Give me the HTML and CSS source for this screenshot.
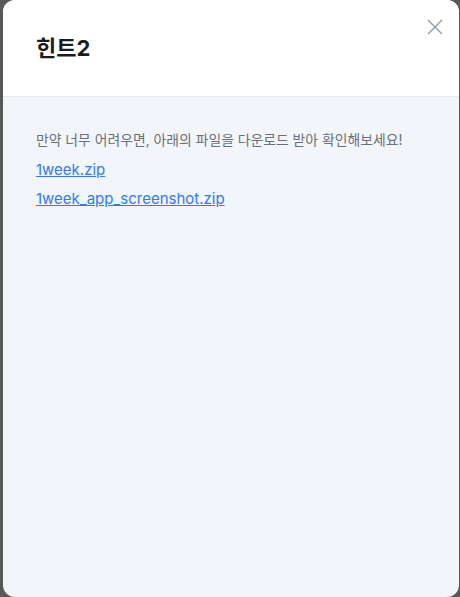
FILE: index.html
```html
<!DOCTYPE html>
<html lang="ko">
<head>
<meta charset="utf-8">
<link rel="stylesheet" href="styles.css">
</head>
<body>
<div class="modal">
  <div class="modal-header">
    <h2 class="title">힌트2</h2>
    <button class="close" aria-label="닫기">
      <svg width="16" height="16" viewBox="0 0 16 16"><path d="M1 1 L15 15 M15 1 L1 15" stroke="#9aa4ae" stroke-width="1.6" fill="none"/></svg>
    </button>
  </div>
  <div class="modal-body">
    <p class="desc">만약 너무 어려우면, 아래의 파일을 다운로드 받아 확인해보세요!</p>
    <a class="file" href="#">1week.zip</a>
    <a class="file" href="#">1week_app_screenshot.zip</a>
  </div>
</div>
</body>
</html>
```
FILE: styles.css
```css
html, body { margin: 0; padding: 0; }
body {
  background: #585858;
  width: 460px;
  height: 597px;
  overflow: hidden;
  font-family: Inter, "Noto Sans CJK KR", sans-serif;
}
.modal {
  margin-left: 3px;
  width: 456px;
  height: 597px;
  border-radius: 12px;
  overflow: hidden;
  background: #f2f5f9;
  display: flex;
  flex-direction: column;
}
.modal-header {
  position: relative;
  background: #fff;
  height: 97px;
  border-bottom: 1px solid #e6eaee;
  box-sizing: border-box;
  padding: 34px 33px 0;
}
.title {
  margin: 0;
  font-size: 22px;
  font-weight: 700;
  color: #1b1b1b;
  line-height: 28px;
}
.close {
  position: absolute;
  top: 19px;
  right: 16px;
  border: 0;
  background: none;
  padding: 0;
  width: 16px;
  height: 16px;
  cursor: pointer;
}
.close svg { display: block; }
.modal-body {
  padding: 33px 33px;
  display: flex;
  flex-direction: column;
  align-items: flex-start;
  gap: 9.5px;
}
.desc {
  margin: 0;
  font-size: 13.85px;
  line-height: 20px;
  color: #6b7078;
}
.file {
  font-size: 15px;
  line-height: 20px;
  color: #3478f6;
  text-decoration: underline;
}
```
